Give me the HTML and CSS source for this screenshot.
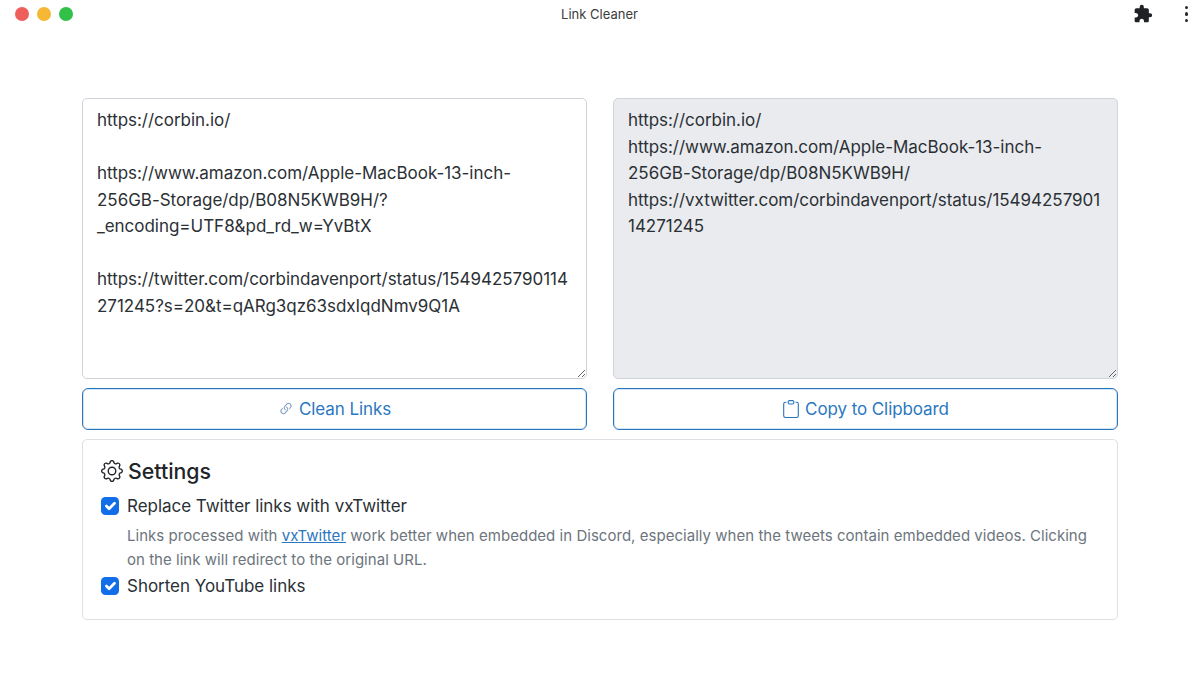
FILE: index.html
```html
<!DOCTYPE html>
<html lang="en">
<head>
<meta charset="utf-8">
<title>Link Cleaner</title>
<link rel="stylesheet" href="styles.css">
</head>
<body>
<header class="titlebar">
  <div class="lights"><span class="light red"></span><span class="light yellow"></span><span class="light green"></span></div>
  <div class="title">Link Cleaner</div>
  <div class="tools">
    <svg class="puzzle" viewBox="0 0 24 24" fill="currentColor"><path d="M20.5 11H19V7c0-1.1-.9-2-2-2h-4V3.5a2.5 2.5 0 0 0-5 0V5H4c-1.1 0-1.99.9-1.99 2v3.8H3.5c1.49 0 2.7 1.21 2.7 2.7s-1.21 2.7-2.7 2.7H2V20c0 1.1.9 2 2 2h3.8v-1.5c0-1.49 1.21-2.7 2.7-2.7 1.49 0 2.7 1.21 2.7 2.7V22H17c1.1 0 2-.9 2-2v-4h1.5a2.5 2.5 0 0 0 0-5z"/></svg>
    <div class="dots"><span></span><span></span><span></span></div>
  </div>
</header>
<main class="content">
  <div class="columns">
    <div class="column">
      <textarea class="box" spellcheck="false">https://corbin.io/

https://www.amazon.com/Apple-MacBook-13-inch-256GB-Storage/dp/B08N5KWB9H/?_encoding=UTF8&amp;pd_rd_w=YvBtX

https://twitter.com/corbindavenport/status/1549425790114271245?s=20&amp;t=qARg3qz63sdxIqdNmv9Q1A</textarea>
      <button class="btn">
        <svg class="ico-link" viewBox="0 0 16 16" fill="currentColor"><path d="M4.715 6.542 3.343 7.914a3 3 0 1 0 4.243 4.243l1.828-1.829A3 3 0 0 0 8.586 5.5L8 6.086a1.002 1.002 0 0 0-.154.199 2 2 0 0 1 .861 3.337L6.88 11.45a2 2 0 1 1-2.83-2.83l.793-.792a4.018 4.018 0 0 1-.128-1.287z"/><path d="M6.586 4.672A3 3 0 0 0 7.414 9.5l.775-.776a2 2 0 0 1-.896-3.346L9.12 3.55a2 2 0 1 1 2.83 2.83l-.793.792c.112.42.155.855.128 1.287l1.372-1.372a3 3 0 1 0-4.243-4.243L6.586 4.672z"/></svg>
        Clean Links
      </button>
    </div>
    <div class="column">
      <textarea class="box output" readonly spellcheck="false">https://corbin.io/
https://www.amazon.com/Apple-MacBook-13-inch-256GB-Storage/dp/B08N5KWB9H/
https://vxtwitter.com/corbindavenport/status/1549425790114271245</textarea>
      <button class="btn">
        <svg class="ico-clip" viewBox="0 0 16 16" fill="currentColor"><path d="M4 1.5H3a2 2 0 0 0-2 2V14a2 2 0 0 0 2 2h10a2 2 0 0 0 2-2V3.5a2 2 0 0 0-2-2h-1v1h1a1 1 0 0 1 1 1V14a1 1 0 0 1-1 1H3a1 1 0 0 1-1-1V3.5a1 1 0 0 1 1-1h1v-1z"/><path d="M9.5 1a.5.5 0 0 1 .5.5v1a.5.5 0 0 1-.5.5h-3a.5.5 0 0 1-.5-.5v-1a.5.5 0 0 1 .5-.5h3zm-3-1A1.5 1.5 0 0 0 5 1.5v1A1.5 1.5 0 0 0 6.5 4h3A1.5 1.5 0 0 0 11 2.5v-1A1.5 1.5 0 0 0 9.5 0h-3z"/></svg>
        Copy to Clipboard
      </button>
    </div>
  </div>
  <section class="card">
    <h2 class="card-title">
      <svg class="ico-gear" viewBox="0 0 16 16" fill="currentColor"><path d="M8 4.754a3.246 3.246 0 1 0 0 6.492 3.246 3.246 0 0 0 0-6.492zM5.754 8a2.246 2.246 0 1 1 4.492 0 2.246 2.246 0 0 1-4.492 0z"/><path d="M9.796 1.343c-.527-1.79-3.065-1.79-3.592 0l-.094.319a.873.873 0 0 1-1.255.52l-.292-.16c-1.64-.892-3.433.902-2.54 2.541l.159.292a.873.873 0 0 1-.52 1.255l-.319.094c-1.79.527-1.79 3.065 0 3.592l.319.094a.873.873 0 0 1 .52 1.255l-.16.292c-.892 1.64.901 3.434 2.541 2.54l.292-.159a.873.873 0 0 1 1.255.52l.094.319c.527 1.79 3.065 1.79 3.592 0l.094-.319a.873.873 0 0 1 1.255-.52l.292.16c1.64.893 3.434-.902 2.54-2.541l-.159-.292a.873.873 0 0 1 .52-1.255l.319-.094c1.79-.527 1.79-3.065 0-3.592l-.319-.094a.873.873 0 0 1-.52-1.255l.16-.292c.893-1.64-.902-3.433-2.541-2.54l-.292.159a.873.873 0 0 1-1.255-.52l-.094-.319zm-2.633.283c.246-.835 1.428-.835 1.674 0l.094.319a1.873 1.873 0 0 0 2.693 1.115l.291-.16c.764-.415 1.6.42 1.184 1.185l-.159.292a1.873 1.873 0 0 0 1.116 2.692l.318.094c.835.246.835 1.428 0 1.674l-.319.094a1.873 1.873 0 0 0-1.115 2.693l.16.291c.415.764-.42 1.6-1.185 1.184l-.291-.159a1.873 1.873 0 0 0-2.693 1.116l-.094.318c-.246.835-1.428.835-1.674 0l-.094-.319a1.873 1.873 0 0 0-2.692-1.115l-.292.16c-.764.415-1.6-.42-1.184-1.185l.159-.291A1.873 1.873 0 0 0 1.945 8.93l-.319-.094c-.835-.246-.835-1.428 0-1.674l.319-.094A1.873 1.873 0 0 0 3.06 4.377l-.16-.292c-.415-.764.42-1.6 1.185-1.184l.292.159a1.873 1.873 0 0 0 2.692-1.115l.094-.319z"/></svg>
      Settings
    </h2>
    <div class="option">
      <span class="check"><svg viewBox="0 0 20 20"><path fill="none" stroke="#fff" stroke-linecap="round" stroke-linejoin="round" stroke-width="3" d="m6 10 3 3 6-6"/></svg></span>
      <span>Replace Twitter links with vxTwitter</span>
    </div>
    <p class="help">Links processed with <a href="#">vxTwitter</a> work better when embedded in Discord, especially when the tweets contain embedded videos. Clicking on the link will redirect to the original URL.</p>
    <div class="option">
      <span class="check"><svg viewBox="0 0 20 20"><path fill="none" stroke="#fff" stroke-linecap="round" stroke-linejoin="round" stroke-width="3" d="m6 10 3 3 6-6"/></svg></span>
      <span>Shorten YouTube links</span>
    </div>
  </section>
</main>
</body>
</html>
```

FILE: styles.css
```css
* { box-sizing: border-box; }
html, body { margin: 0; height: 100%; background: #fff; overflow: hidden; }
body { font-family: Inter, "Liberation Sans", sans-serif; color: #212529; }

.titlebar {
  height: 30px;
  display: grid;
  grid-template-columns: 1fr auto 1fr;
  align-items: center;
  padding: 0 12px 2px 11px;
}
.lights { display: flex; gap: 8px; padding-left: 4px; }
.light { width: 14px; height: 14px; border-radius: 50%; }
.red { background: #ee5f5b; }
.yellow { background: #f6b735; }
.green { background: #31c048; }
.title { font-size: 13px; color: #3c3c3c; }
.tools { display: flex; justify-content: flex-end; align-items: center; gap: 32px; color: #202124; }
.puzzle { width: 20px; height: 20px; }
.dots { display: flex; flex-direction: column; gap: 3px; }
.dots span { width: 3.5px; height: 3.5px; border-radius: 50%; background: #2a2a2e; }

.content { padding: 68px 82px 0; display: flex; flex-direction: column; gap: 9px; }
.columns { display: grid; grid-template-columns: 505px 505px; column-gap: 26px; }
.column { display: flex; flex-direction: column; gap: 9px; }

.box {
  display: block;
  width: 100%;
  height: 281px;
  padding: 8px 14px;
  border: 1px solid #ced4da;
  border-radius: 5px;
  font: 17px/26.5px Inter, "Liberation Sans", sans-serif;
  letter-spacing: -.03px;
  color: #2b3035;
  background: #fff;
  outline: none;
  overflow: hidden;
  resize: vertical;
}
.output { background: #e9ebef; }

.btn {
  height: 42px;
  display: flex;
  align-items: center;
  justify-content: center;
  gap: 5px;
  padding: 0 0 1px;
  border: 1px solid #2a77c0;
  border-radius: 6px;
  box-shadow: inset 0 0 0 1px rgba(42, 119, 192, .2);
  background: #fff;
  color: #2a77c0;
  font: 17px Inter, "Liberation Sans", sans-serif;
  letter-spacing: -.09px;
}
.ico-link { width: 16px; height: 16px; color: #7d9cc4; margin-top: 1px; }
.ico-clip { width: 18px; height: 18px; margin-top: 1px; }

.card {
  height: 181px;
  padding: 15px 18px;
  border: 1px solid #dcdfe3;
  border-radius: 5px;
}
.card-title {
  margin: 0 0 6px;
  display: flex;
  align-items: center;
  gap: 5px;
  font-size: 21.3px;
  font-weight: 500;
  line-height: 32px;
}
.ico-gear { width: 22px; height: 22px; }
.option { display: flex; align-items: center; gap: 8px; font-size: 17px; letter-spacing: -.03px; line-height: 26px; color: #2b3035; }
.check {
  width: 18px;
  height: 18px;
  border-radius: 4.5px;
  background: #116ee8;
  display: flex;
}
.help {
  margin: 5px 0 2px 26px;
  font-size: 15px;
  letter-spacing: .03px;
  line-height: 23.5px;
  color: #6c757d;
}
.help a { color: #2a77c0; }
```
